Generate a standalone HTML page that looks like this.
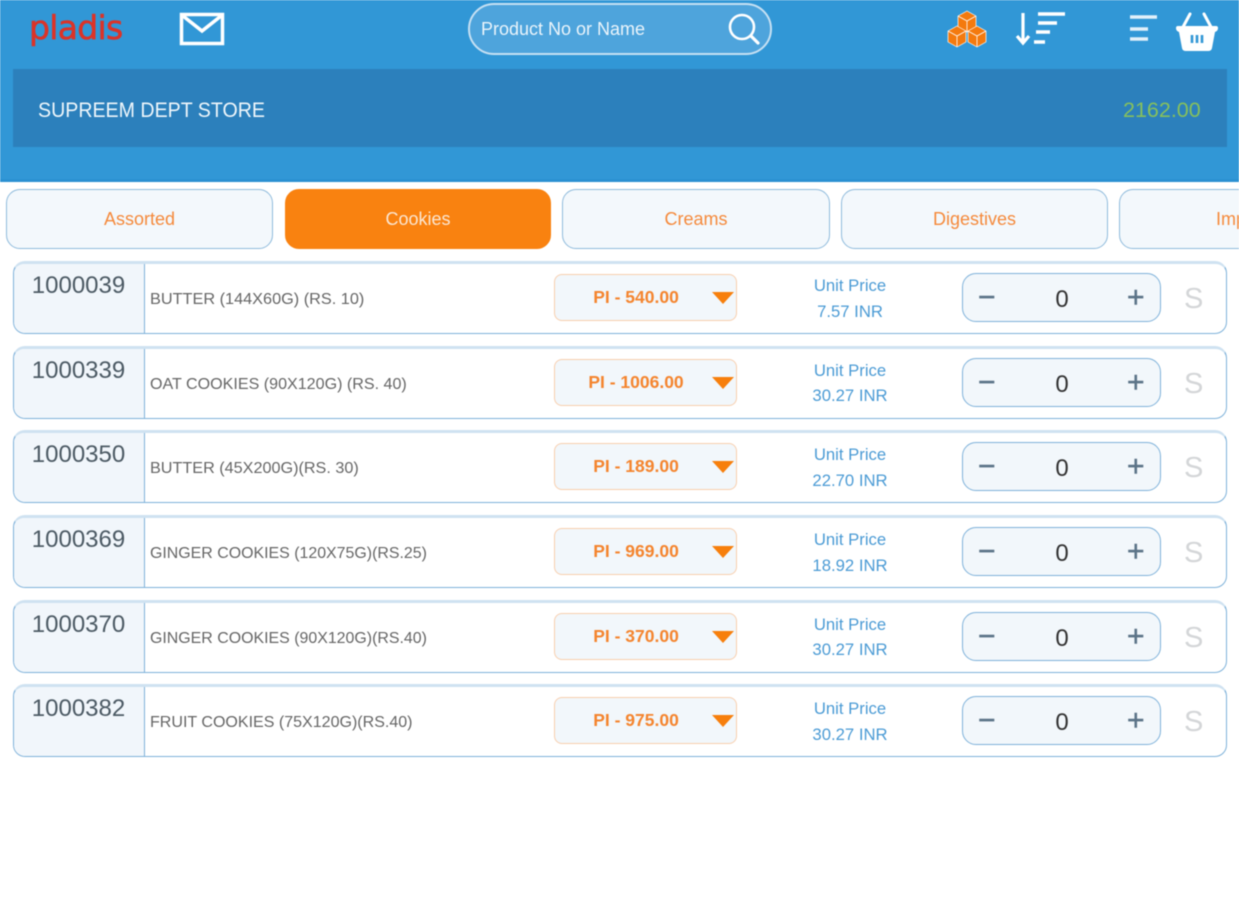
<!DOCTYPE html>
<html><head><meta charset="utf-8"><style>
*{box-sizing:border-box}
html,body{margin:0;padding:0;background:#fff}
body{width:1239px;height:900px;overflow:hidden;position:relative;font-family:"Liberation Sans",sans-serif}
#w{position:absolute;left:0;top:0;width:1239px;height:900px;overflow:hidden;filter:blur(.6px)}
.a{position:absolute}
.t{position:absolute;top:189px;height:60px;width:267px;border:1.5px solid #8fbbdc;border-radius:14px;background:#f3f8fc;color:#f58a3c;font-size:18px;text-align:center;line-height:59px}
.r{position:absolute;left:13px;width:1214px;height:73px;border:1.5px solid #7fb2da;border-top:3px solid #cfe2f1;border-radius:12px;background:#fff;overflow:hidden}
.n{position:absolute;left:0;top:-3px;width:131px;height:74px;background:#f1f6fb;border-right:1.5px solid #7fb2da;color:#4c5a64;font-size:24px;text-align:center;line-height:50px;padding-right:1px}
.d{position:absolute;left:136px;top:25px;font-size:16px;color:#666;line-height:22px;white-space:nowrap;transform:scaleX(1.017);transform-origin:left}
.p{position:absolute;left:540px;top:10px;width:183px;height:47px;border:1.5px solid #f8cfae;border-radius:8px;background:#f2f7fb;color:#f4852f;font-size:17.5px;font-weight:bold;line-height:45px;text-align:center;padding-right:19px}
.p i{position:absolute;left:157px;top:17px;width:0;height:0;border-left:11px solid transparent;border-right:11px solid transparent;border-top:12px solid #f77f0c}
.u{position:absolute;left:756px;width:160px;top:9px;text-align:center;color:#4b9bd5;font-size:16.7px;line-height:25.5px}
.q{position:absolute;left:948px;top:9px;width:199px;height:49px;border:1.5px solid #7fb2da;border-radius:14px;background:#f2f7fb}
.q b{position:absolute;top:1px;font-weight:normal;line-height:46px}
.m{left:15px;color:#5c7488;font-size:30px;-webkit-text-stroke:.5px #5c7488}
.v{left:0;top:2px!important;width:198px;text-align:center;font-size:24px;color:#333;line-height:48px!important}
.s{position:absolute;left:1170px;top:18px;color:#d4d6d8;font-size:29px;line-height:34px}
</style></head><body><div id="w">
<div class="a" style="left:0;top:0;width:1239px;height:182px;background:#3197d6;border-bottom:3px solid #2a90d2"></div>
<div class="a" style="left:13px;top:69px;width:1214px;height:78px;background:#2c80bc"></div>

<div class="a" style="left:29px;top:6px;font-family:'DejaVu Sans',sans-serif;font-size:33px;line-height:44px;color:#dc3328;letter-spacing:-.7px;-webkit-text-stroke:.6px #dc3328">pladis</div>
<svg class="a" style="left:179px;top:12px" width="46" height="34" viewBox="0 0 46 34"><rect x="2.500" y="2.500" width="41" height="29" fill="none" stroke="#fff" stroke-width="3.500"/><path d="M4 4 L23 19 L42 4" fill="none" stroke="#fff" stroke-width="3.500"/></svg>

<div class="a" style="left:468px;top:3px;width:304px;height:52px;border:2px solid #c5e0f3;border-radius:26px;background:#4ea4dc"></div>
<div class="a" style="left:481px;top:17px;color:#eaf4fb;font-size:18px;line-height:24px">Product No or Name</div>
<svg class="a" style="left:724px;top:10px" width="40" height="38" viewBox="0 0 40 38"><circle cx="18" cy="17" r="12" fill="none" stroke="#fff" stroke-width="2.600"/><path d="M27 26 L34 33" stroke="#fff" stroke-width="3.200" stroke-linecap="round"/></svg>

<svg class="a" style="left:947px;top:9px" width="40" height="40" viewBox="0 0 40 40"><g stroke="#fff" stroke-width=".7" fill="#f47a0e" stroke-linejoin="round"><path d="M20 2 L29 7 V18 L20 23 L11 18 V7 Z"/><path d="M10 17 L19 22 V33 L10 38 L1 33 V22 Z"/><path d="M30 17 L39 22 V33 L30 38 L21 33 V22 Z"/></g><path d="M11 7 L20 12 L29 7 M20 12 V23 M1 22 L10 27 L19 22 M10 27 V38 M21 22 L30 27 L39 22 M30 27 V38" fill="none" stroke="#fff" stroke-width=".8"/></svg>

<svg class="a" style="left:1014px;top:10px" width="54" height="38" viewBox="0 0 54 38"><path d="M9 3 V33 M3 26 L9 33 L15 26" fill="none" stroke="#fff" stroke-width="3.200"/><path d="M24 4 H51 M24 13 H43 M22 22 H36 M20 32 H31" stroke="#fff" stroke-width="3.400"/></svg>

<svg class="a" style="left:1128px;top:14px" width="32" height="30" viewBox="0 0 32 30"><path d="M2 3 H29 M2 15 H20 M2 25 H20" stroke="#e2f0fa" stroke-width="3.400"/></svg>

<svg class="a" style="left:1174px;top:11px" width="46" height="42" viewBox="0 0 46 42"><path d="M9 16 L16 3 M37 16 L30 3" stroke="#fff" stroke-width="3" stroke-linecap="round"/><path d="M2 17 Q2 15 4 15 H42 Q44 15 44 17 Q44 20 41 21 L38 37 Q37.500 40 34 40 H12 Q8.500 40 8 37 L5 21 Q2 20 2 17 Z" fill="#fff"/><path d="M18 24 V32 M23 24 V32 M28 24 V32" stroke="#3197d6" stroke-width="2.600"/></svg>

<div class="a" style="left:38px;top:97px;color:#eef6fb;font-size:21.500px;line-height:26px;white-space:nowrap;transform:scaleX(.912);transform-origin:left">SUPREEM DEPT STORE</div>
<div class="a" style="left:1123px;top:97px;color:#86c05d;font-size:21.500px;line-height:26px">2162.00</div>

<div class="t" style="left:6px">Assorted</div>
<div class="t" style="left:285px;width:266px;background:#f98210;border-color:#f98210;color:#fbe6d2">Cookies</div>
<div class="t" style="left:562px;width:268px">Creams</div>
<div class="t" style="left:841px">Digestives</div>
<div class="t" style="left:1119px;text-align:left;padding-left:96px">Imported</div>

<div class="r" style="top:261px"><div class="n">1000039</div><div class="d">BUTTER (144X60G) (RS. 10)</div><div class="p">PI - 540.00<i></i></div><div class="u">Unit Price<br>7.57 INR</div><div class="q"><b class="m">−</b><b class="v">0</b><b class="m" style="left:164px">+</b></div><div class="s">S</div></div>
<div class="r" style="top:345.500px"><div class="n">1000339</div><div class="d" style="transform:scaleX(1.005)">OAT COOKIES (90X120G) (RS. 40)</div><div class="p">PI - 1006.00<i></i></div><div class="u">Unit Price<br>30.27 INR</div><div class="q"><b class="m">−</b><b class="v">0</b><b class="m" style="left:164px">+</b></div><div class="s">S</div></div>
<div class="r" style="top:430px"><div class="n">1000350</div><div class="d" style="transform:scaleX(1.012)">BUTTER (45X200G)(RS. 30)</div><div class="p">PI - 189.00<i></i></div><div class="u">Unit Price<br>22.70 INR</div><div class="q"><b class="m">−</b><b class="v">0</b><b class="m" style="left:164px">+</b></div><div class="s">S</div></div>
<div class="r" style="top:515px"><div class="n">1000369</div><div class="d" style="transform:scaleX(.995)">GINGER COOKIES (120X75G)(RS.25)</div><div class="p">PI - 969.00<i></i></div><div class="u">Unit Price<br>18.92 INR</div><div class="q"><b class="m">−</b><b class="v">0</b><b class="m" style="left:164px">+</b></div><div class="s">S</div></div>
<div class="r" style="top:599.500px"><div class="n">1000370</div><div class="d" style="transform:scaleX(.995)">GINGER COOKIES (90X120G)(RS.40)</div><div class="p">PI - 370.00<i></i></div><div class="u">Unit Price<br>30.27 INR</div><div class="q"><b class="m">−</b><b class="v">0</b><b class="m" style="left:164px">+</b></div><div class="s">S</div></div>
<div class="r" style="top:684px"><div class="n">1000382</div><div class="d" style="transform:scaleX(1.002)">FRUIT COOKIES (75X120G)(RS.40)</div><div class="p">PI - 975.00<i></i></div><div class="u">Unit Price<br>30.27 INR</div><div class="q"><b class="m">−</b><b class="v">0</b><b class="m" style="left:164px">+</b></div><div class="s">S</div></div>
</div></body></html>
